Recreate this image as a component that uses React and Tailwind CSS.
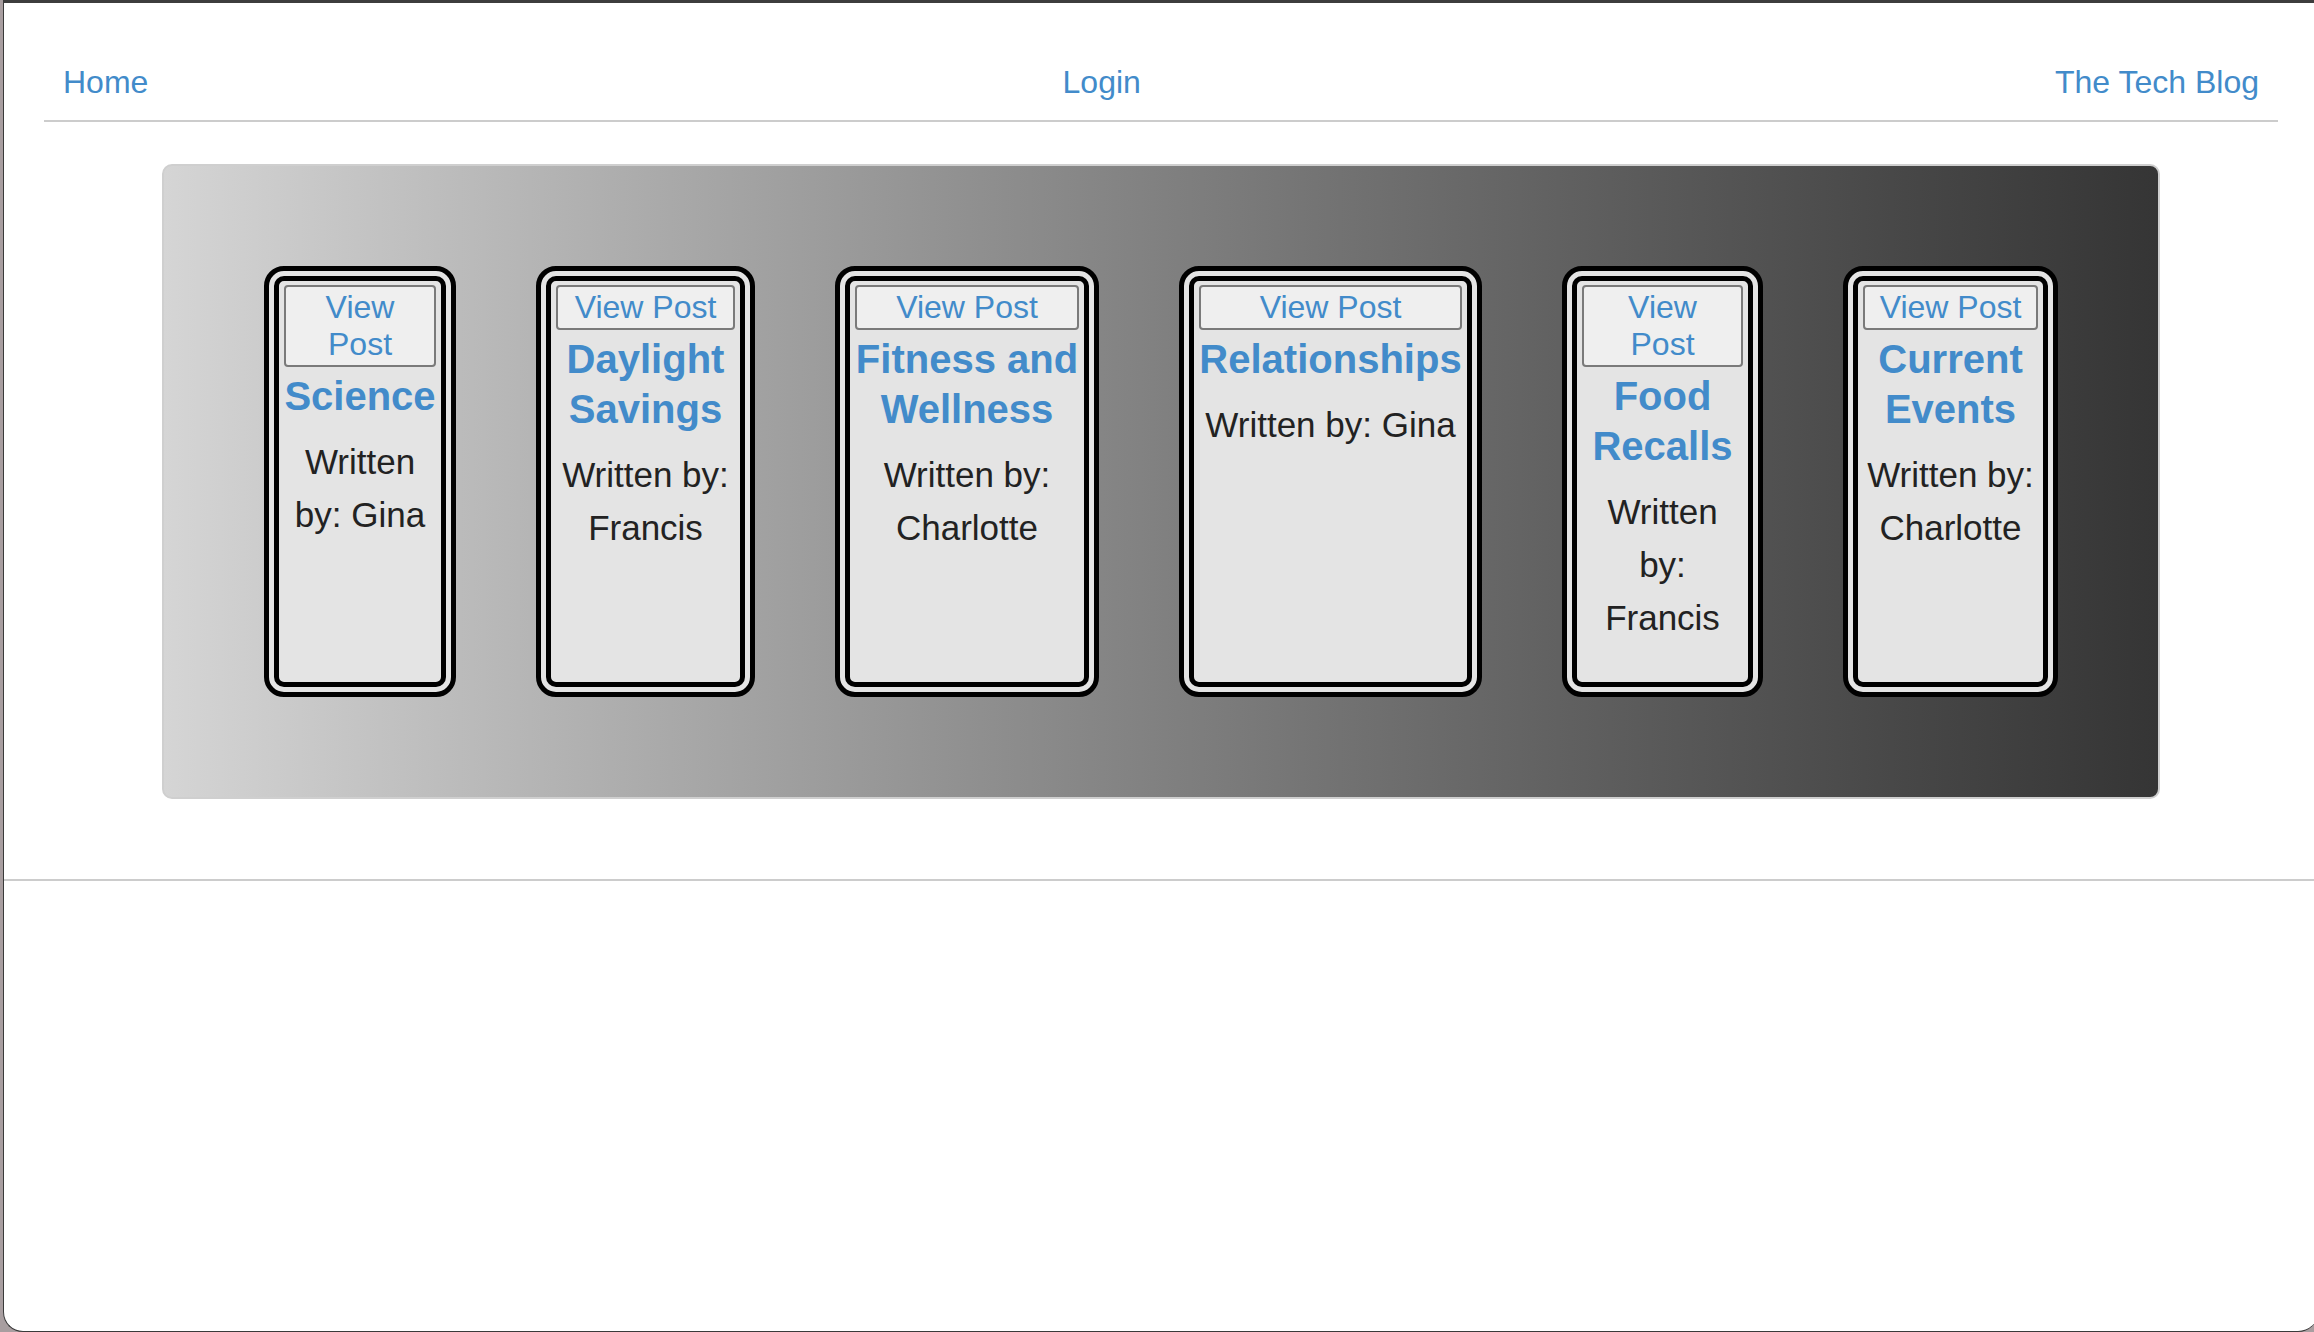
const posts = [
  { title: 'Science', author: 'Gina', width: 'w-[192px]' },
  { title: 'Daylight Savings', author: 'Francis', width: 'w-[219px]' },
  { title: 'Fitness and Wellness', author: 'Charlotte', width: 'w-[264px]' },
  { title: 'Relationships', author: 'Gina', width: 'w-[303px]' },
  { title: 'Food Recalls', author: 'Francis', width: 'w-[201px]' },
  { title: 'Current Events', author: 'Charlotte', width: 'w-[215px]' },
];

const PostCard = ({ post }) => {
  return (
    <div
      className={`${post.width} h-[431px] shrink-0 border-[15px] border-double border-black rounded-[20px] bg-[#e4e4e4] px-[5px] pt-[4px] text-center`}
    >
      <button className="block w-full rounded-[4px] border-2 border-[#7a7a7a] bg-[#efefef] px-[12px] py-[2px] text-[32px] leading-[37px] text-[#428bca]">
        View Post
      </button>
      <h3 className="mt-[4px] text-[40px] font-bold leading-[50px] text-[#428bca]">
        {post.title}
      </h3>
      <p className="mt-[14px] text-[35px] leading-[53px] text-[#222]">
        Written by: {post.author}
      </p>
    </div>
  );
};

const App = () => {
  return (
    <div className="h-[1332px] w-[2314px] overflow-hidden bg-[#a89ea0] pl-[3px] font-['Liberation_Sans',Arial,sans-serif]">
      <div className="h-[1332px] w-[2315px] rounded-b-[20px] border-l border-b border-[#3a3a3a] border-t-[3px] border-t-[#3d3d3d] bg-white">
        {/* Nav */}
        <nav className="mx-[40px] flex items-center justify-between border-b-2 border-[#cccccc] px-[19px] pt-[61px] pb-[19px] text-[32px] leading-[37px] text-[#428bca]">
          <a href="#">Home</a>
          <a href="#">Login</a>
          <a href="#">The Tech Blog</a>
        </nav>

        {/* Posts */}
        <main className="mx-auto mt-[42px] w-[1998px] rounded-[10px] border-2 border-[#cfcfcf] bg-gradient-to-r from-[#d5d5d5] to-[#353535] py-[100px]">
          <div className="flex items-start justify-center gap-[80px]">
            {posts.map((post, index) => (
              <PostCard key={index} post={post} />
            ))}
          </div>
        </main>

        <footer className="mt-[80px] border-t-2 border-[#cccccc]"></footer>
      </div>
    </div>
  );
};

export default App;
